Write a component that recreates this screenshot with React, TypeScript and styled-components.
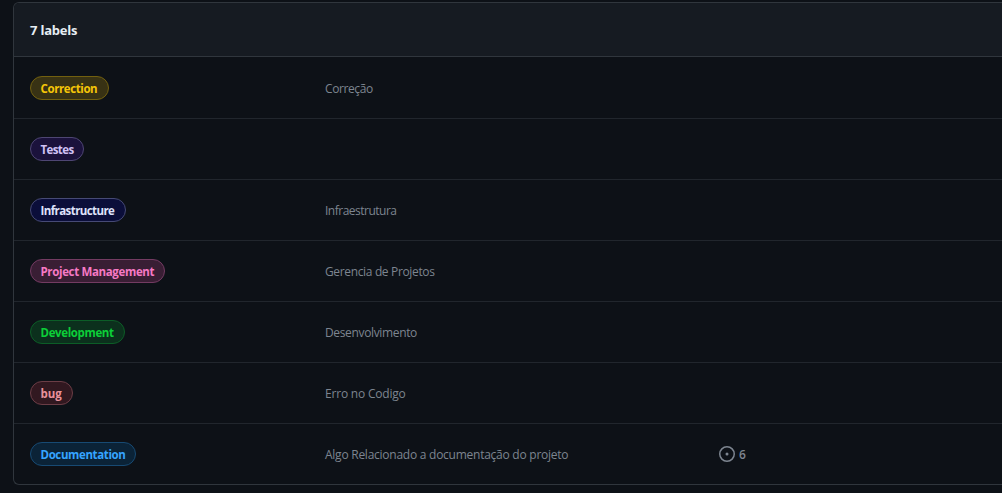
import React from 'react';
import styled, { createGlobalStyle } from 'styled-components';

const GlobalStyle = createGlobalStyle`
  * { box-sizing: border-box; }
  html, body { margin: 0; background: #0d1117; }
  body { height: 493px; overflow: hidden; font-family: "Open Sans", "Noto Sans", sans-serif; }
`;

const Page = styled.main`
  padding: 2px 0 8px 13px;
  height: 493px;
`;

const Box = styled.section`
  height: 483px;
  border: 1px solid #30363d;
  border-right: 0;
  border-radius: 6px 0 0 6px;
  overflow: hidden;
`;

const Header = styled.header`
  display: flex;
  align-items: center;
  height: 54px;
  padding: 1px 16px 0;
  background: #161b22;
  border-bottom: 1px solid #30363d;
`;

const Title = styled.h1`
  margin: 0;
  font-size: 13px;
  line-height: 20px;
  font-weight: 700;
  letter-spacing: -0.2px;
  color: #e6edf3;
`;

const List = styled.ul`
  margin: 0;
  padding: 0;
  list-style: none;
`;

const Row = styled.li`
  display: grid;
  grid-template-columns: 295px 393px 1fr;
  align-items: center;
  height: 61px;
  padding: 0 16px;
  border-bottom: 1px solid #21262d;

  &:first-child { height: 62px; padding-top: 1px; }
  &:last-child { height: 60px; border-bottom: 0; }
`;

const Tag = styled.span<{ $fg: string; $bg: string; $line: string; $width: number; $spacing: number }>`
  display: flex;
  align-items: center;
  width: ${(p) => p.$width}px;
  height: 24px;
  padding: 2px 0 0 9.5px;
  border: 1px solid ${(p) => p.$line};
  border-radius: 12px;
  background: ${(p) => p.$bg};
  color: ${(p) => p.$fg};
  font-size: 11.5px;
  line-height: 18px;
  font-weight: 700;
  letter-spacing: ${(p) => p.$spacing}px;
  white-space: nowrap;
`;

const Description = styled.span<{ $spacing: number }>`
  padding-top: 2px;
  font-size: 12px;
  line-height: 18px;
  color: #7d8590;
  letter-spacing: ${(p) => p.$spacing}px;
  white-space: nowrap;
`;

const Issues = styled.span`
  display: flex;
  align-items: center;
  gap: 4px;
  padding-left: 1px;
  font-size: 12px;
  line-height: 18px;
  font-weight: 600;
  color: #7d8590;
`;

const IssueCount = styled.span`
  padding-top: 2px;
`;

type Label = {
  name: string; fg: string; bg: string; line: string; width: number; spacing: number;
  description?: string; descSpacing?: number; issues?: number;
};

const labels: Label[] = [
  { name: 'Correction', fg: '#f5c508', bg: '#383214', line: '#72600f', width: 79, spacing: -0.4, description: 'Correção', descSpacing: -0.4 },
  { name: 'Testes', fg: '#d0c1f5', bg: '#1b123c', line: '#4e4673', width: 54, spacing: -0.6 },
  { name: 'Infrastructure', fg: '#dfe2fb', bg: '#0b0e3a', line: '#464a75', width: 96, spacing: -0.58, description: 'Infraestrutura', descSpacing: -0.5 },
  { name: 'Project Management', fg: '#f679c4', bg: '#391e34', line: '#733b62', width: 135, spacing: -0.35, description: 'Gerencia de Projetos', descSpacing: -0.35 },
  { name: 'Development', fg: '#0ccf38', bg: '#0c301d', line: '#0c5d27', width: 95, spacing: -0.37, description: 'Desenvolvimento', descSpacing: -0.35 },
  { name: 'bug', fg: '#e8919b', bg: '#311820', line: '#6b3d46', width: 43, spacing: -0.1, description: 'Erro no Codigo', descSpacing: -0.2 },
  { name: 'Documentation', fg: '#35a4ff', bg: '#0b2337', line: '#174a73', width: 106, spacing: -0.38, description: 'Algo Relacionado a documentação do projeto', descSpacing: -0.25, issues: 6 },
];

const IssueIcon = () => (
  <svg width="16" height="16" viewBox="0 0 16 16" fill="#7d8590" aria-hidden="true">
    <path d="M8 9.5a1.5 1.5 0 1 0 0-3 1.5 1.5 0 0 0 0 3Z" />
    <path d="M8 0a8 8 0 1 1 0 16A8 8 0 0 1 8 0ZM1.5 8a6.5 6.5 0 1 0 13 0 6.5 6.5 0 0 0-13 0Z" />
  </svg>
);

export default function App() {
  return (
    <Page>
      <GlobalStyle />
      <Box>
        <Header><Title>7 labels</Title></Header>
        <List>
          {labels.map((l) => (
            <Row key={l.name}>
              <Tag $fg={l.fg} $bg={l.bg} $line={l.line} $width={l.width} $spacing={l.spacing}>{l.name}</Tag>
              <Description $spacing={l.descSpacing ?? 0}>{l.description}</Description>
              {l.issues !== undefined && <Issues><IssueIcon /><IssueCount>{l.issues}</IssueCount></Issues>}
            </Row>
          ))}
        </List>
      </Box>
    </Page>
  );
}
